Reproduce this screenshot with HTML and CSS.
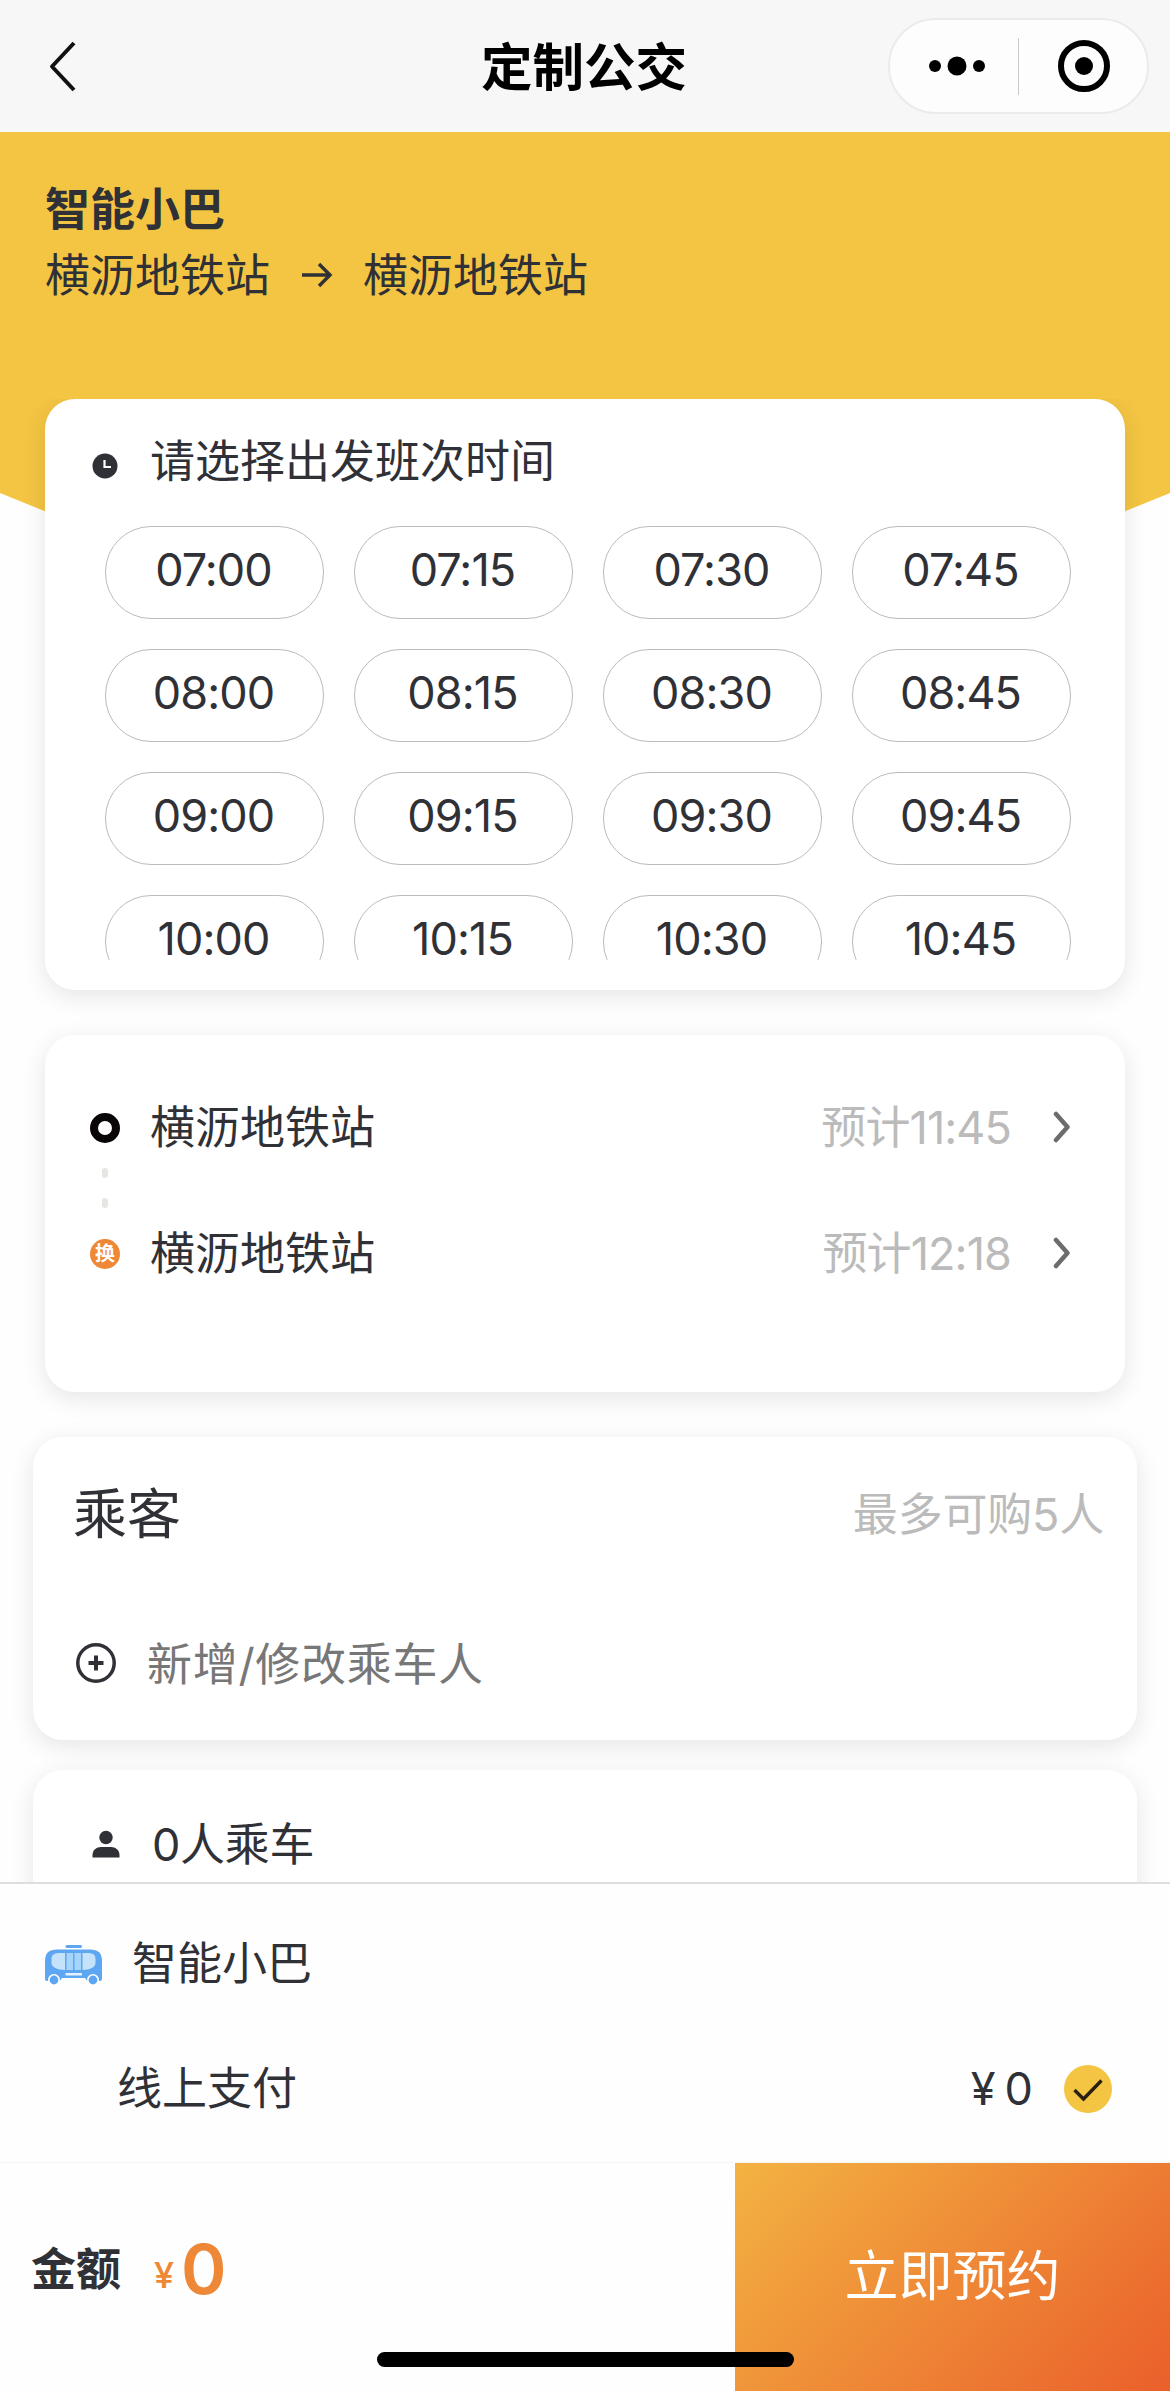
FILE: index.html
```html
<!DOCTYPE html>
<html lang="zh-CN">
<head>
<meta charset="utf-8">
<title>定制公交</title>
<link rel="stylesheet" href="styles.css">
</head>
<body>
<div class="screen">
  <header class="nav">
    <svg class="nav-back" width="40" height="60" viewBox="0 0 40 60"><path d="M30 6 L8 29.500 L30 53" fill="none" stroke="#111" stroke-width="4" stroke-linejoin="round"/></svg>
    <h1 class="nav-title">定制公交</h1>
    <div class="capsule">
      <svg class="capsule-dots" width="60" height="24" viewBox="0 0 60 24"><circle cx="8" cy="12" r="6"/><circle cx="30" cy="12" r="9.500"/><circle cx="52" cy="12" r="6"/></svg>
      <span class="capsule-line"></span>
      <svg class="capsule-close" width="54" height="54" viewBox="0 0 54 54"><circle cx="27" cy="27" r="23" fill="none" stroke="#000" stroke-width="6"/><circle cx="27" cy="27" r="9"/></svg>
    </div>
  </header>

  <section class="hero">
    <div class="hero-name">智能小巴</div>
    <div class="hero-route">
      <span>横沥地铁站</span>
      <svg width="32" height="28" viewBox="0 0 32 28"><path d="M1 14 H29 M18 3 L29 14 L18 25" fill="none" stroke="#303136" stroke-width="3.400"/></svg>
      <span>横沥地铁站</span>
    </div>
  </section>

  <main class="cards">
    <section class="card card-time">
      <div class="time-head">
        <svg width="26" height="26" viewBox="0 0 26 26"><circle cx="13" cy="13" r="12.500" fill="#303136"/><path d="M12.500 7 V14 H19" fill="none" stroke="#fff" stroke-width="2.200"/></svg>
        <span>请选择出发班次时间</span>
      </div>
      <div class="time-grid">
        <span class="slot">07:00</span><span class="slot">07:15</span><span class="slot">07:30</span><span class="slot">07:45</span>
        <span class="slot">08:00</span><span class="slot">08:15</span><span class="slot">08:30</span><span class="slot">08:45</span>
        <span class="slot">09:00</span><span class="slot">09:15</span><span class="slot">09:30</span><span class="slot">09:45</span>
        <span class="slot">10:00</span><span class="slot">10:15</span><span class="slot">10:30</span><span class="slot">10:45</span>
      </div>
    </section>

    <section class="card card-stops">
      <div class="stop">
        <span class="mark mark-start"></span>
        <span class="stop-name">横沥地铁站</span>
        <span class="stop-eta">预计11:45</span>
        <svg class="chevron" width="18" height="32" viewBox="0 0 18 32"><path d="M3 3 L14.500 16 L3 29" fill="none" stroke="#6c6c6c" stroke-width="4.500" stroke-linecap="round" stroke-linejoin="round"/></svg>
      </div>
      <div class="stop-link"><i></i><i></i></div>
      <div class="stop">
        <span class="mark mark-change">换</span>
        <span class="stop-name">横沥地铁站</span>
        <span class="stop-eta">预计12:18</span>
        <svg class="chevron" width="18" height="32" viewBox="0 0 18 32"><path d="M3 3 L14.500 16 L3 29" fill="none" stroke="#6c6c6c" stroke-width="4.500" stroke-linecap="round" stroke-linejoin="round"/></svg>
      </div>
    </section>

    <section class="card card-riders">
      <div class="riders-head">
        <h2>乘客</h2>
        <span class="riders-limit">最多可购5人</span>
      </div>
      <div class="riders-add">
        <svg width="42" height="42" viewBox="0 0 42 42" fill="none" stroke="#303136"><circle cx="21" cy="21" r="18.200" stroke-width="3.500"/><path d="M21 13.500 V28.500 M13.500 21 H28.500" stroke-width="4"/></svg>
        <span>新增/修改乘车人</span>
      </div>
    </section>

    <section class="card card-count">
      <svg width="28" height="28" viewBox="0 0 28 28" fill="#303136"><circle cx="14" cy="7.500" r="6.700"/><path d="M.5 27.500 V25 C.5 20 4.500 17 9 17 H19 C23.500 17 27.500 20 27.500 25 V27.500 Z"/></svg>
      <span>0人乘车</span>
    </section>
  </main>

  <section class="pay">
    <div class="pay-type">
      <svg width="58" height="40" viewBox="0 0 58 40">
        <rect x="20.500" y="0" width="16.500" height="3" rx="1.500" fill="#5da6f2"/>
        <path d="M0 16 C0 8 4 4.500 12 4.500 H45 C53 4.500 57 8 57 16 V34 Q57 36 55 36 H2 Q0 36 0 34 Z" fill="#5da6f2"/>
        <path d="M20 8 H15 C9 8 6.500 10 6.500 14 V18 C6.500 22 12 25 20 25 Z M37.500 8 H42.500 C48.500 8 50.500 10 50.500 14 V18 C50.500 22 45.500 25 37.500 25 Z" fill="#c4e2fa"/>
        <path d="M21.500 8 H28 V25 H21.500 Z M29.500 8 H36 V25 H29.500 Z" fill="#a5d5fb"/>
        <rect x="20.500" y="28" width="16.500" height="2.500" fill="#e4f3ff"/>
        <path d="M14 37 L17 33 H40 L43 37 Z" fill="#fff"/>
        <circle cx="9" cy="35" r="6" fill="#fff"/><circle cx="48" cy="35" r="6" fill="#fff"/>
        <circle cx="9" cy="35" r="4.400" fill="#5da6f2"/><circle cx="48" cy="35" r="4.400" fill="#5da6f2"/>
      </svg>
      <span>智能小巴</span>
    </div>
    <div class="pay-method">
      <span class="pay-name">线上支付</span>
      <span class="pay-price"><span class="yen">¥</span>0</span>
      <svg width="48" height="48" viewBox="0 0 48 48"><circle cx="24" cy="24" r="24" fill="#f4c543"/><path d="M10.500 25 L19.500 34 L37.500 15.500" fill="none" stroke="#2a2010" stroke-width="3.400"/></svg>
    </div>
  </section>

  <footer class="bar">
    <span class="bar-label">金额</span>
    <span class="bar-yen">¥</span>
    <span class="bar-sum">0</span>
    <span class="bar-button">立即预约</span>
    <span class="home-indicator"></span>
  </footer>
</div>
</body>
</html>
```
FILE: styles.css
```css
* { box-sizing: border-box; }
body {
  margin: 0;
  font-family: Inter, "Noto Sans CJK SC", sans-serif;
  font-size: 45px;
  line-height: 60px;
  color: #303136;
  background: #fefefe;
}
svg { display: block; flex: none; }
h1, h2 { margin: 0; }
span { white-space: nowrap; }
.screen {
  width: 1170px;
  height: 2391px;
  display: flex;
  flex-direction: column;
  overflow: hidden;
}

/* navigation bar */
.nav {
  flex: none;
  height: 132px;
  background: #f7f7f7;
  display: grid;
  grid-template-columns: 1fr 206px 1fr;
  align-items: center;
}
.nav-back { margin-left: 44px; margin-top: 1px; }
.nav-title { font-size: 51.5px; font-weight: 700; color: #000; margin-top: 2px; margin-left: -1px; }
.capsule {
  justify-self: end;
  margin-right: 21px;
  width: 261px;
  height: 96px;
  border: 2px solid #ebebeb;
  border-radius: 48px;
  background: #fdfdfd;
  display: flex;
  align-items: center;
}
.capsule-dots { margin-left: 37px; }
.capsule-line { width: 1px; height: 57px; background: #c9c9c9; margin-left: 31px; }
.capsule-close { margin-left: 38px; }

/* yellow banner */
.hero {
  flex: none;
  height: 408px;
  margin-bottom: -141px;
  padding: 48px 45px 0;
  background: #f4c543;
  clip-path: polygon(0 0, 100% 0, 100% 361px, 96% 380px, 80% 100%, 20% 100%, 4% 380px, 0 361px);
}
.hero-name { font-weight: 700; }
.hero-route { display: flex; align-items: center; margin-top: 6px; }
.hero-route svg { margin: -2px 30px 0 31px; }

/* cards */
.cards {
  flex: none;
  height: 1483px;
  padding: 0 33px;
  overflow: hidden;
  position: relative;
}
.card {
  background: #fff;
  border-radius: 30px;
  box-shadow: 0 6px 24px rgba(0, 0, 0, .1);
}
.card-time { height: 591px; margin: 0 12px; padding: 33px 40px 0 47px; }
.time-head { height: 60px; display: flex; align-items: center; }
.time-head svg { margin-top: 8px; }
.time-head span { margin-left: 32px; }
.time-grid {
  margin: 34px 0 0 13px;
  height: 434px;
  overflow: hidden;
  display: grid;
  grid-template-columns: repeat(4, 219px);
  grid-auto-rows: 93px;
  gap: 30px;
}
.slot {
  border: 1px solid #bbb;
  border-radius: 46px;
  text-align: center;
  line-height: 86px;
  letter-spacing: -.9px;
  text-indent: -2px;
}
.card-stops { height: 357px; margin: 45px 12px 0; padding: 62px 54px 0 45px; }
.stop { height: 60px; display: flex; align-items: center; }
.mark { flex: none; width: 30px; height: 30px; border-radius: 50%; margin-top: 2px; }
.mark-start { border: 8px solid #0a0506; }
.mark-change {
  background: #ee8836;
  color: #fff;
  font-size: 20px;
  font-weight: 700;
  line-height: 30px;
  text-align: center;
}
.stop-name { margin: 2px 0 0 30px; flex: 1; }
.stop-eta { color: #bbb; letter-spacing: -.9px; margin-top: 2px; }
.chevron { margin-left: 42px; }
.stop-link {
  height: 66px;
  padding: 11px 0 15px 12px;
  display: flex;
  flex-direction: column;
  justify-content: space-between;
}
.stop-link i { width: 6px; height: 10px; border-radius: 3px; background: #e6e6e3; }
.card-riders { height: 303px; margin-top: 45px; padding: 48px 33px 0 40px; }
.riders-head { height: 60px; display: flex; justify-content: space-between; align-items: center; }
.riders-head h2 { font-size: 54px; font-weight: 400; }
.riders-limit { color: #bbb; letter-spacing: -.2px; }
.riders-add { height: 60px; margin-top: 90px; display: flex; align-items: center; color: #777; margin-left: 2px; }
.riders-add svg { margin-top: -5px; }
.riders-add span { margin-left: 30px; letter-spacing: .7px; }
.card-count { height: 200px; margin-top: 30px; padding: 45px 59px; display: flex; }
.card-count svg { margin-top: 15px; }
.card-count span { margin-left: 32px; letter-spacing: -.3px; }

/* payment panel */
.pay { flex: none; height: 281px; background: #fefefe; border-top: 2px solid #dedede; }
.pay-type { display: flex; align-items: center; padding: 50px 45px 0; }
.pay-type svg { margin-top: 1px; }
.pay-type span { margin-left: 29px; }
.pay-method { display: flex; align-items: center; margin-top: 65px; padding: 0 58px 0 117px; }
.pay-name { flex: 1; }
.pay-price { margin-top: -1px; }
.yen { margin-right: 9px; }
.pay-method svg { margin-left: 31px; }

/* bottom bar */
.bar {
  flex: none;
  height: 228px;
  position: relative;
  display: flex;
  align-items: flex-start;
  padding-left: 31px;
  background: #fefefe;
  box-shadow: 0 -1px 0 #f5f5f5;
}
.bar-label { font-weight: 700; margin-top: 77px; }
.bar-yen { font-size: 36px; font-weight: 500; color: #ee8836; margin: 82px 0 0 33px; }
.bar-sum { font-size: 69px; font-weight: 600; color: #ee8836; margin: 76px 0 0 7px; }
.bar-button {
  margin-left: auto;
  width: 435px;
  height: 228px;
  line-height: 228px;
  text-align: center;
  font-size: 54px;
  color: #fff;
  background: linear-gradient(135deg, #f3b342, #ea5f2b);
}
.home-indicator {
  position: absolute;
  left: 377px;
  top: 189px;
  width: 417px;
  height: 15px;
  border-radius: 8px;
  background: #000;
}
```
